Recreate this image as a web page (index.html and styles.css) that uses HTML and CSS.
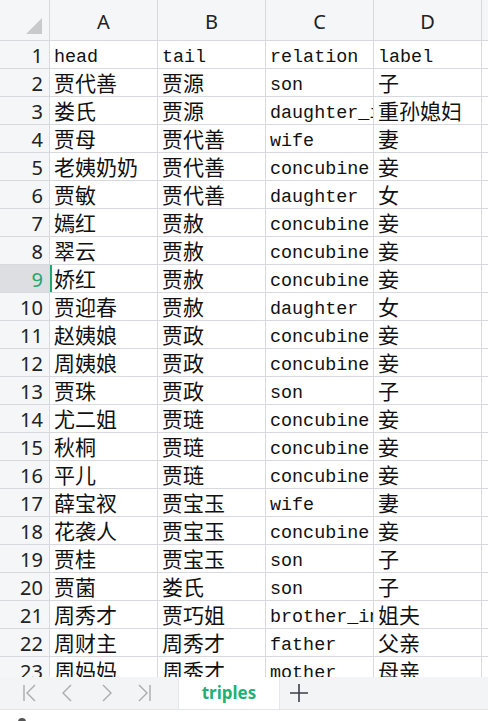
FILE: index.html
```html
<!DOCTYPE html>
<html lang="zh-CN">
<head>
<meta charset="utf-8">
<title>triples</title>
<link rel="stylesheet" href="styles.css">
</head>
<body>
<div class="app">
  <div class="sheet">
    <div class="grid">
      <div class="corner"><span class="tri"></span></div>
      <div class="colh">A</div><div class="colh">B</div><div class="colh">C</div><div class="colh">D</div><div class="colh edge"></div>

      <div class="rowh">1</div><div class="cell en">head</div><div class="cell en">tail</div><div class="cell en">relation</div><div class="cell en">label</div><div class="cell edge"></div>
      <div class="rowh">2</div><div class="cell">贾代善</div><div class="cell">贾源</div><div class="cell en">son</div><div class="cell">子</div><div class="cell edge"></div>
      <div class="rowh">3</div><div class="cell">娄氏</div><div class="cell">贾源</div><div class="cell en clip">daughter_in_law</div><div class="cell">重孙媳妇</div><div class="cell edge"></div>
      <div class="rowh">4</div><div class="cell">贾母</div><div class="cell">贾代善</div><div class="cell en">wife</div><div class="cell">妻</div><div class="cell edge"></div>
      <div class="rowh">5</div><div class="cell">老姨奶奶</div><div class="cell">贾代善</div><div class="cell en">concubine</div><div class="cell">妾</div><div class="cell edge"></div>
      <div class="rowh">6</div><div class="cell">贾敏</div><div class="cell">贾代善</div><div class="cell en">daughter</div><div class="cell">女</div><div class="cell edge"></div>
      <div class="rowh">7</div><div class="cell">嫣红</div><div class="cell">贾赦</div><div class="cell en">concubine</div><div class="cell">妾</div><div class="cell edge"></div>
      <div class="rowh">8</div><div class="cell">翠云</div><div class="cell">贾赦</div><div class="cell en">concubine</div><div class="cell">妾</div><div class="cell edge"></div>
      <div class="rowh active">9</div><div class="cell current">娇红</div><div class="cell">贾赦</div><div class="cell en">concubine</div><div class="cell">妾</div><div class="cell edge"></div>
      <div class="rowh">10</div><div class="cell">贾迎春</div><div class="cell">贾赦</div><div class="cell en">daughter</div><div class="cell">女</div><div class="cell edge"></div>
      <div class="rowh">11</div><div class="cell">赵姨娘</div><div class="cell">贾政</div><div class="cell en">concubine</div><div class="cell">妾</div><div class="cell edge"></div>
      <div class="rowh">12</div><div class="cell">周姨娘</div><div class="cell">贾政</div><div class="cell en">concubine</div><div class="cell">妾</div><div class="cell edge"></div>
      <div class="rowh">13</div><div class="cell">贾珠</div><div class="cell">贾政</div><div class="cell en">son</div><div class="cell">子</div><div class="cell edge"></div>
      <div class="rowh">14</div><div class="cell">尤二姐</div><div class="cell">贾琏</div><div class="cell en">concubine</div><div class="cell">妾</div><div class="cell edge"></div>
      <div class="rowh">15</div><div class="cell">秋桐</div><div class="cell">贾琏</div><div class="cell en">concubine</div><div class="cell">妾</div><div class="cell edge"></div>
      <div class="rowh">16</div><div class="cell">平儿</div><div class="cell">贾琏</div><div class="cell en">concubine</div><div class="cell">妾</div><div class="cell edge"></div>
      <div class="rowh">17</div><div class="cell">薛宝衩</div><div class="cell">贾宝玉</div><div class="cell en">wife</div><div class="cell">妻</div><div class="cell edge"></div>
      <div class="rowh">18</div><div class="cell">花袭人</div><div class="cell">贾宝玉</div><div class="cell en">concubine</div><div class="cell">妾</div><div class="cell edge"></div>
      <div class="rowh">19</div><div class="cell">贾桂</div><div class="cell">贾宝玉</div><div class="cell en">son</div><div class="cell">子</div><div class="cell edge"></div>
      <div class="rowh">20</div><div class="cell">贾菌</div><div class="cell">娄氏</div><div class="cell en">son</div><div class="cell">子</div><div class="cell edge"></div>
      <div class="rowh">21</div><div class="cell">周秀才</div><div class="cell">贾巧姐</div><div class="cell en clip">brother_in_law</div><div class="cell">姐夫</div><div class="cell edge"></div>
      <div class="rowh">22</div><div class="cell">周财主</div><div class="cell">周秀才</div><div class="cell en">father</div><div class="cell">父亲</div><div class="cell edge"></div>
      <div class="rowh">23</div><div class="cell">周妈妈</div><div class="cell">周秀才</div><div class="cell en">mother</div><div class="cell">母亲</div><div class="cell edge"></div>
    </div>
  </div>
  <div class="tabbar">
    <div class="nav">
      <svg class="navicon" width="18" height="20" viewBox="0 0 18 20"><path d="M3 2V18M14 2L6 10L14 18" /></svg>
      <svg class="navicon" width="18" height="20" viewBox="0 0 18 20"><path d="M12 2L4 10L12 18" /></svg>
      <svg class="navicon" width="18" height="20" viewBox="0 0 18 20"><path d="M6 2L14 10L6 18" /></svg>
      <svg class="navicon" width="18" height="20" viewBox="0 0 18 20"><path d="M4 2L12 10L4 18M15 2V18" /></svg>
    </div>
    <div class="tab">triples</div>
    <svg class="add" width="20" height="20" viewBox="0 0 20 20"><path d="M10 1V19M1 10H19" /></svg>
  </div>
  <div class="status"><span class="dot"></span></div>
</div>
</body>
</html>
```
FILE: styles.css
```css
* { box-sizing: border-box; }
html, body { margin: 0; padding: 0; background: #fff; }
.app { width: 488px; height: 721px; overflow: hidden; display: flex; flex-direction: column; }
.sheet { height: 677px; overflow: hidden; flex: none; }
.grid {
  display: grid;
  grid-template-columns: 50px 108px 108px 108px 108px 6px;
  grid-template-rows: 41px;
  grid-auto-rows: 28px;
}
.corner, .colh, .rowh {
  background: #f5f6f7;
  border-right: 1px solid #d7d9de;
  border-bottom: 1px solid #d7d9de;
  font-family: "Noto Sans", "Open Sans", sans-serif;
  color: #222;
  font-size: 20px;
}
.corner { position: relative; }
.tri {
  position: absolute; left: 26px; top: 18px;
  width: 0; height: 0;
  border-left: 16px solid transparent;
  border-bottom: 16px solid #c9cacc;
}
.colh { display: flex; align-items: center; justify-content: center; padding-top: 2px; }
.colh.edge { border-right: none; }
.rowh { display: flex; align-items: center; justify-content: flex-end; padding-right: 6px; padding-top: 1px; font-size: 20px; }
.rowh.active { background: #dcdee2; color: #1fa76d; }
.cell {
  border-right: 1px solid #d7d9de;
  border-bottom: 1px solid #d7d9de;
  padding-left: 4px;
  white-space: nowrap;
  display: flex; align-items: center;
  font-family: "Noto Sans CJK SC", sans-serif;
  font-size: 21px;
  line-height: 27px;
  color: #111;
}
.cell.en { font-family: "Liberation Mono", monospace; font-size: 18.4px; padding-top: 5px; }
.cell.clip { overflow: hidden; }
.cell.edge { border-right: none; }
.cell.current { box-shadow: inset 2px 0 0 #1fa76d; }
.tabbar {
  height: 33px; flex: none;
  background: #f3f4f6;
  border-bottom: 1px solid #e2e4e8;
  display: flex; align-items: stretch;
}
.nav { display: flex; align-items: center; gap: 20px; padding-left: 21px; width: 178px; }
.navicon path { fill: none; stroke: #a9abae; stroke-width: 1.4; }
.tab {
  width: 102px; background: #fff;
  border-left: 1px solid #e6e7ea; border-right: 1px solid #e6e7ea;
  display: flex; align-items: center; justify-content: center;
  font-family: "Noto Sans", "Open Sans", sans-serif; font-weight: 700; font-size: 17px;
  color: #1fb077; padding-bottom: 2px;
}
.add { align-self: center; margin-left: 9px; }
.add path { fill: none; stroke: #3b3f47; stroke-width: 1.6; }
.status { flex: 1; background: #fff; display: flex; align-items: flex-start; padding-left: 18px; }
.dot { display: block; margin-top: 8px; width: 8px; height: 8px; border-radius: 50%; background: #555; }
```
